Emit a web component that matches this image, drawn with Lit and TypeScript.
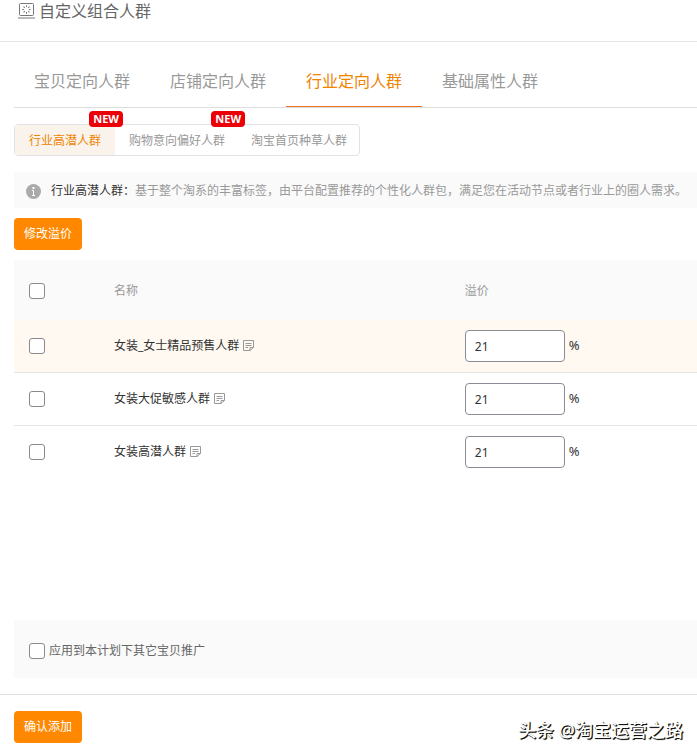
import { LitElement, html, css, svg } from "lit";
import { customElement, state } from "lit/decorators.js";
import { classMap } from "lit/directives/class-map.js";

interface Crowd {
  id: string;
  name: string;
  premium: number;
}

const noteIcon = html`<svg class="note" viewBox="0 0 12 12" aria-hidden="true">
  <path d="M10.500 7.500V0.500H0.500V10.500H7L10.500 7.500H7V10.500M2.500 3.500H8.500M2.500 5.500H8.500M2.500 7.500H5" />
</svg>`;

const rays = [0, 45, 90, 135, 180, 225, 270, 315].map(
  (a) => svg`<path d="M8.500 2.300v1.800" transform="rotate(${a} 8.500 6.500)" />`
);

@customElement("app-root")
export class AppRoot extends LitElement {
  static styles = css`
    :host {
      display: block;
      position: relative;
      background: #fff;
      color: #333;
      font: 12px/20px "Noto Sans", "Noto Sans CJK SC", sans-serif;
      overflow-x: hidden;
    }
    * {
      box-sizing: border-box;
    }
    button,
    input {
      font: inherit;
      margin: 0;
    }
    button {
      border: 0;
      background: none;
      color: inherit;
      cursor: pointer;
    }
    .header {
      display: flex;
      align-items: center;
      gap: 4px;
      height: 42px;
      padding: 0 18px 20px;
      border-bottom: 1px solid #e6e6e6;
      color: #666;
    }
    .title {
      margin: 0;
      font-size: 16px;
      line-height: 22px;
      font-weight: 400;
    }
    .title-icon {
      width: 17px;
      height: 16px;
      fill: none;
      stroke: #777;
    }
    .content {
      padding: 14px 0 16px 14px;
    }
    .tabs {
      display: flex;
      border-bottom: 1px solid #ddd;
    }
    .tab {
      height: 51px;
      padding: 0 20px;
      font-size: 16px;
      color: #999;
      white-space: nowrap;
      border-bottom: 1px solid transparent;
    }
    .tab.active {
      color: #f08300;
      border-color: #f07020;
    }
    .subtabs {
      display: inline-flex;
      gap: 2px;
      height: 32px;
      margin: 16px 0;
      border: 1px solid #e2e2e2;
      border-radius: 4px;
      vertical-align: top;
    }
    .subtab {
      position: relative;
      padding: 2px 12px 0;
      color: #999;
      white-space: nowrap;
    }
    .subtab:first-child {
      padding: 2px 14px 0;
    }
    .subtab.active {
      background: #faf3ec;
      color: #f08300;
    }
    .badge {
      position: absolute;
      top: -14px;
      right: -8px;
      padding: 0 4px;
      border-radius: 4px;
      background: #eb0008;
      color: #fff;
      font: 700 11px/16px "Noto Sans", sans-serif;
    }
    .notice {
      display: flex;
      align-items: center;
      gap: 10px;
      height: 36px;
      margin: 0 0 10px;
      padding: 2px 12px 0;
      background: #fafafa;
      color: #999;
      white-space: nowrap;
    }
    .notice b {
      font-weight: 400;
      color: #333;
    }
    .info {
      flex: none;
      width: 15px;
      height: 15px;
    }
    .primary {
      display: block;
      height: 32px;
      padding: 0 10px;
      border-radius: 4px;
      background: #ff8800;
      color: #fff;
    }
    .table-area {
      min-height: 360px;
      margin-top: 10px;
    }
    table {
      width: 100%;
      table-layout: fixed;
      border-collapse: separate;
      border-spacing: 0;
    }
    th,
    td {
      padding: 0;
      text-align: left;
      font-weight: 400;
      vertical-align: middle;
    }
    th {
      height: 60px;
      padding-top: 2px;
      background: #fafafa;
      color: #999;
    }
    td {
      height: 53px;
      border-bottom: 1px solid #e6e6e6;
    }
    tr:last-child td {
      border-bottom-color: transparent;
    }
    tr.highlight td {
      background: #fff9f2;
    }
    .col-check {
      width: 100px;
    }
    .col-premium {
      width: 34%;
    }
    .check-cell {
      padding-left: 15px;
    }
    .check {
      appearance: none;
      display: block;
      flex: none;
      width: 16px;
      height: 16px;
      border: 1px solid #8a8a8a;
      border-radius: 3px;
      background: #fff;
    }
    .check:checked {
      background: #ff8800;
      border-color: #ff8800;
    }
    .name,
    .premium {
      display: flex;
      align-items: center;
      gap: 4px;
    }
    .note {
      width: 12px;
      height: 12px;
      fill: none;
      stroke: #999;
    }
    .amount {
      width: 100px;
      height: 32px;
      padding: 0 9px;
      border: 1px solid #8c8c96;
      border-radius: 4px;
      background: #fff;
      color: #333;
    }
    .percent {
      padding-bottom: 2px;
      font-size: 13px;
    }
    .apply {
      display: flex;
      align-items: center;
      gap: 4px;
      height: 58px;
      padding: 3px 15px 0;
      background: #fafafa;
      color: #666;
    }
    .footer {
      display: flex;
      align-items: flex-end;
      justify-content: space-between;
      padding: 16px 14px 12px;
      border-top: 1px solid #e0e0e0;
    }
    .credit {
      color: #fff;
      font-size: 18px;
      line-height: 26px;
      font-weight: 500;
      text-shadow: 1px 1px 0 #111, 1px 1px 1px #111;
      white-space: nowrap;
    }
  `;

  @state() private tab = 2;
  @state() private subtab = 0;
  @state() private selected = new Set<string>();

  private tabs = ["宝贝定向人群", "店铺定向人群", "行业定向人群", "基础属性人群"];
  private subtabs = [
    { label: "行业高潜人群", isNew: true },
    { label: "购物意向偏好人群", isNew: true },
    { label: "淘宝首页种草人群", isNew: false },
  ];
  private crowds: Crowd[] = [
    { id: "presale", name: "女装_女士精品预售人群", premium: 21 },
    { id: "promo", name: "女装大促敏感人群", premium: 21 },
    { id: "potential", name: "女装高潜人群", premium: 21 },
  ];

  private toggle(id: string) {
    const next = new Set(this.selected);
    next.has(id) ? next.delete(id) : next.add(id);
    this.selected = next;
  }

  private toggleAll() {
    const all = this.selected.size === this.crowds.length;
    this.selected = new Set(all ? [] : this.crowds.map((c) => c.id));
  }

  private renderRow(crowd: Crowd, index: number) {
    return html`<tr class=${classMap({ highlight: index === 0 })}>
      <td class="check-cell">
        <input
          class="check"
          type="checkbox"
          aria-label=${crowd.name}
          .checked=${this.selected.has(crowd.id)}
          @change=${() => this.toggle(crowd.id)}
        />
      </td>
      <td>
        <div class="name"><label for=${crowd.id}>${crowd.name}</label>${noteIcon}</div>
      </td>
      <td>
        <div class="premium">
          <input class="amount" id=${crowd.id} type="text" inputmode="numeric" .value=${String(crowd.premium)} />
          <span class="percent">%</span>
        </div>
      </td>
    </tr>`;
  }

  render() {
    return html`
      <header class="header">
        <svg class="title-icon" viewBox="0 0 17 16" aria-hidden="true">
          <rect x="1.500" y="0.500" width="14" height="12" rx="1" />
          <path d="M0 15h17" />
          ${rays}
        </svg>
        <h1 class="title">自定义组合人群</h1>
      </header>
      <main class="content">
        <nav class="tabs" role="tablist">
          ${this.tabs.map(
            (label, i) => html`<button
              class=${classMap({ tab: true, active: i === this.tab })}
              role="tab"
              aria-selected=${i === this.tab}
              @click=${() => (this.tab = i)}
            >${label}</button>`
          )}
        </nav>
        <div class="subtabs" role="tablist">
          ${this.subtabs.map(
            (item, i) => html`<button
              class=${classMap({ subtab: true, active: i === this.subtab })}
              role="tab"
              aria-selected=${i === this.subtab}
              @click=${() => (this.subtab = i)}
            >${item.label}${item.isNew ? html`<span class="badge">NEW</span>` : null}</button>`
          )}
        </div>
        <p class="notice">
          <svg class="info" viewBox="0 0 15 15" aria-hidden="true">
            <circle cx="7.500" cy="7.500" r="7.500" fill="#aaa" />
            <path d="M6 6.500h1.500v5M6 11.500h3" fill="none" stroke="#fff" />
            <rect x="6.500" y="3" width="2" height="2" fill="#fff" />
          </svg>
          <span><b>行业高潜人群：</b>基于整个淘系的丰富标签，由平台配置推荐的个性化人群包，满足您在活动节点或者行业上的圈人需求。</span>
        </p>
        <button class="primary">修改溢价</button>
        <div class="table-area">
          <table>
            <thead>
              <tr>
                <th class="col-check check-cell">
                  <input
                    class="check"
                    type="checkbox"
                    aria-label="全选"
                    .checked=${this.selected.size === this.crowds.length}
                    @change=${this.toggleAll}
                  />
                </th>
                <th>名称</th>
                <th class="col-premium">溢价</th>
              </tr>
            </thead>
            <tbody>
              ${this.crowds.map((crowd, i) => this.renderRow(crowd, i))}
            </tbody>
          </table>
        </div>
        <div class="apply">
          <input class="check" id="apply" type="checkbox" />
          <label for="apply">应用到本计划下其它宝贝推广</label>
        </div>
      </main>
      <footer class="footer">
        <button class="primary">确认添加</button>
        <span class="credit">头条 @淘宝运营之路</span>
      </footer>
    `;
  }
}
